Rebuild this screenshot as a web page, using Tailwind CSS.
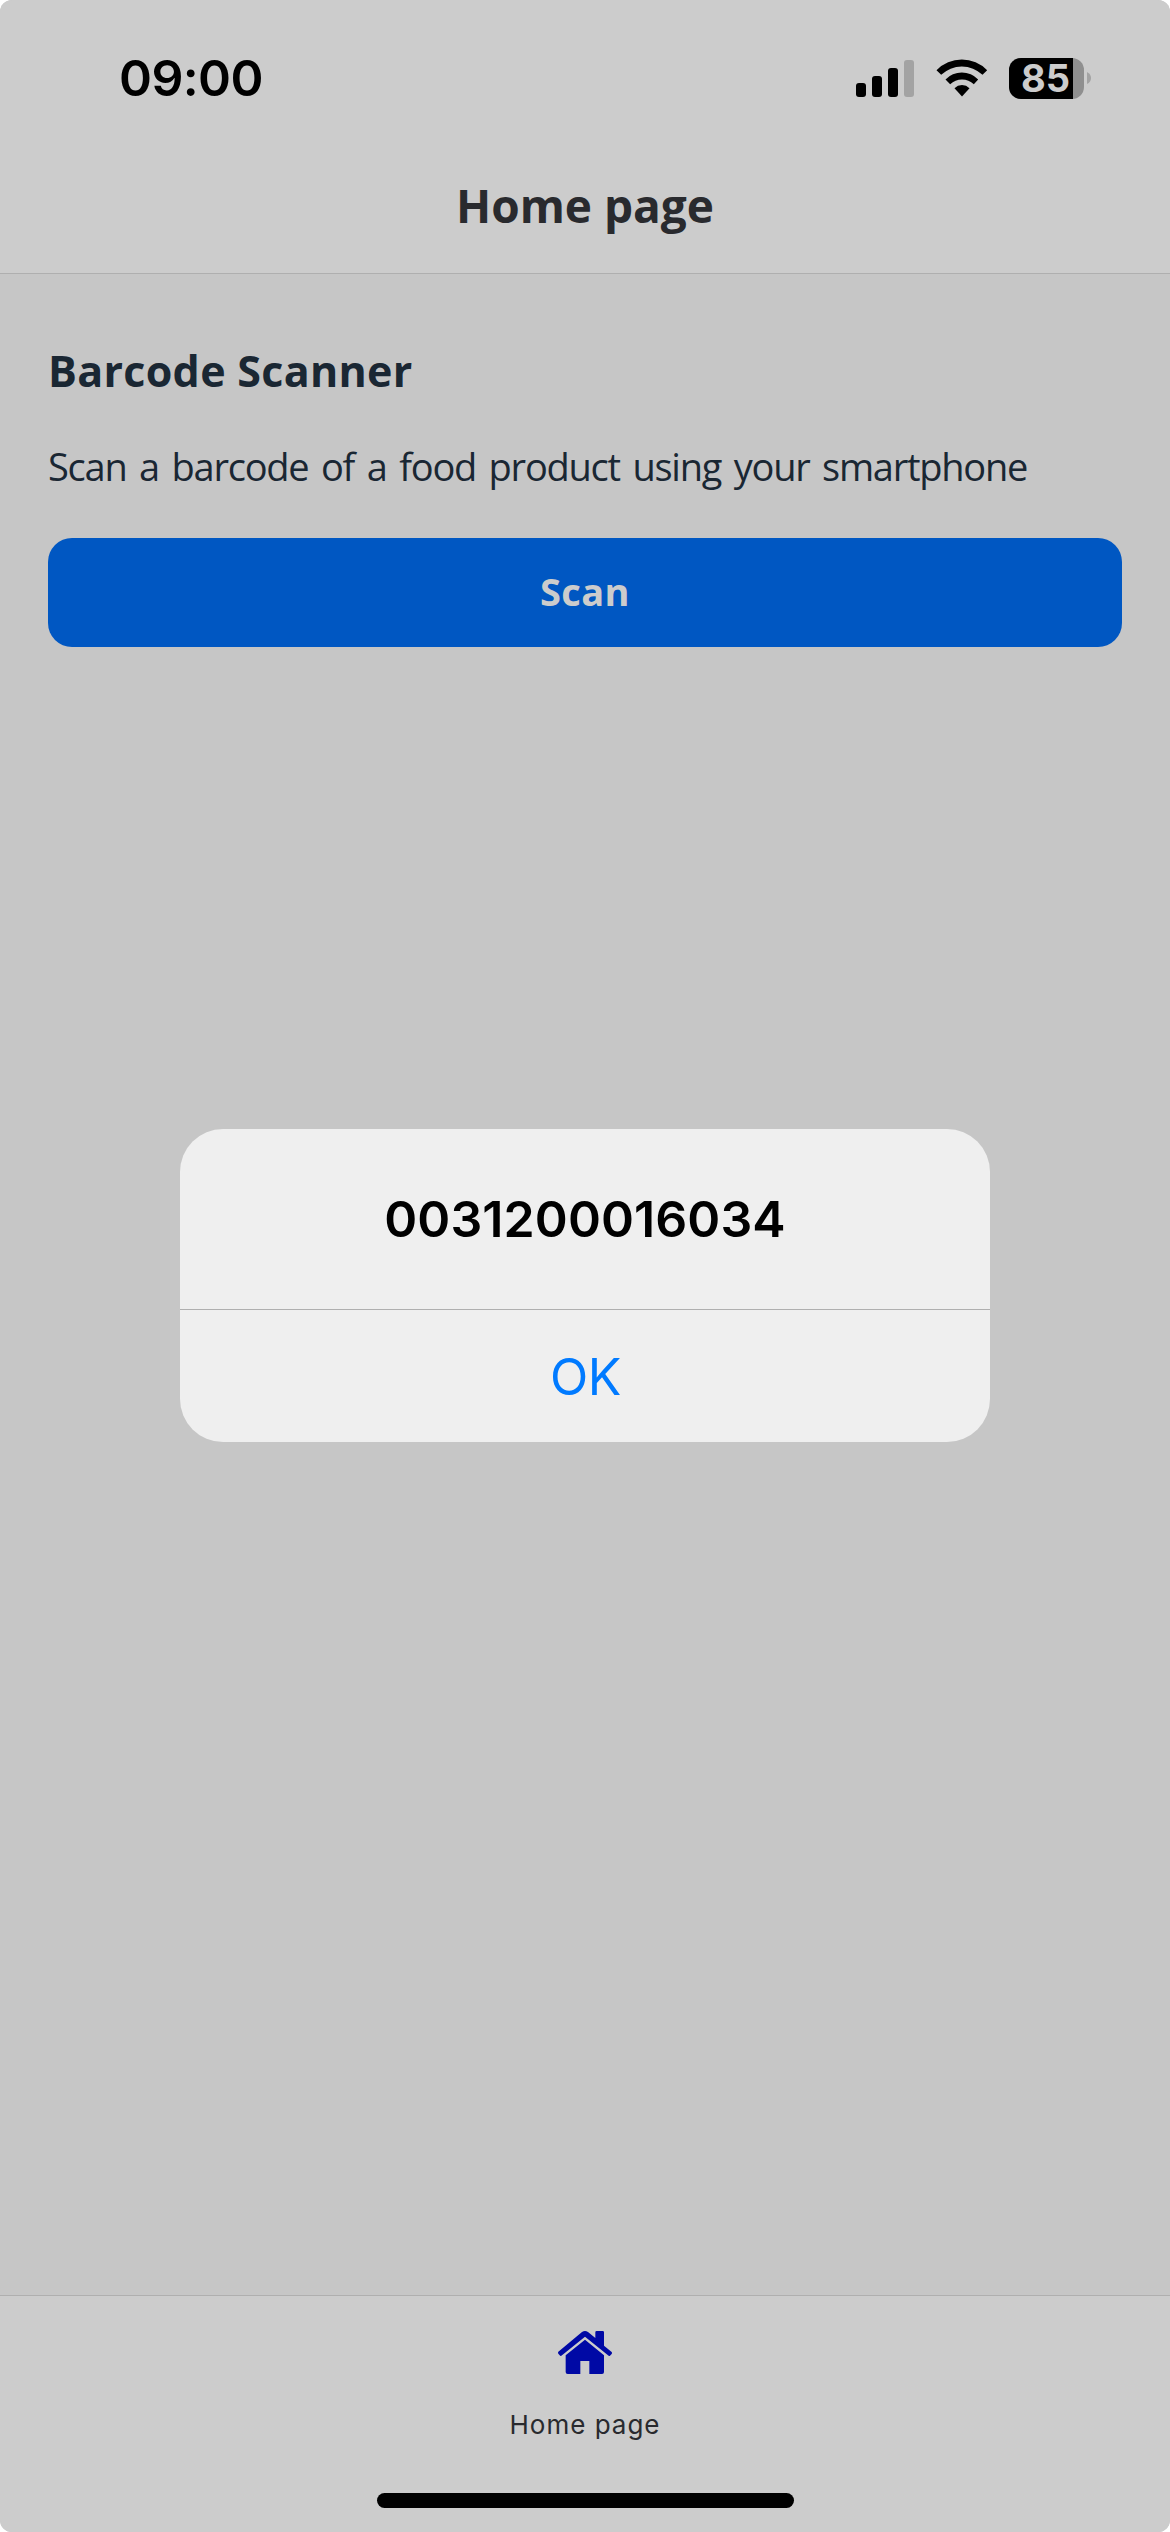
<!DOCTYPE html>
<html lang="en">
<head>
<meta charset="utf-8">
<title>Home page</title>
<script src="https://cdn.jsdelivr.net/npm/@tailwindcss/browser@4"></script>
</head>
<body class="bg-white">
<div class="relative flex h-[2532px] w-[1170px] flex-col overflow-hidden rounded-[12px] bg-[#c6c6c6] font-['Open_Sans',sans-serif]">
  <header class="flex h-[274px] flex-col border-b border-[#afafaf] bg-[#cccccc]">
    <div class="flex h-[156px] items-center justify-between pl-[119px] pr-[79px] font-['Inter',sans-serif]">
      <time class="text-[50px] font-semibold leading-none tracking-[-0.6px] text-black">09:00</time>
      <div class="flex items-center">
        <svg class="h-[38px] w-[58px]" viewBox="0 0 58 38">
          <rect x="0" y="24" width="10" height="14" rx="3"/>
          <rect x="16" y="17" width="10" height="21" rx="3"/>
          <rect x="32" y="9" width="10" height="29" rx="3"/>
          <rect x="48" y="1" width="10" height="37" rx="3" fill="#a3a3a3"/>
        </svg>
        <svg class="ml-[21px] h-[40px] w-[54px]" viewBox="313.5 82.5 162 120">
          <path d="M318 119A106 106 0 0 1 470 119L456 133A89 89 0 0 0 332 133Z"/>
          <path d="M345 147A68 68 0 0 1 443 147L430 161A52 52 0 0 0 359 161Z"/>
          <path d="M372 173A32 32 0 0 1 417 173L394.500 198Z"/>
        </svg>
        <div class="ml-[20px] flex items-center gap-[3px]">
          <div class="flex h-[41px] w-[75px] items-center rounded-[12px] bg-[#8f8f8f]">
            <div class="flex h-full w-[64px] items-center rounded-l-[12px] bg-black pl-[12px] text-[38px] font-bold leading-[41px] text-[#cccccc]">85</div>
          </div>
          <svg class="h-[14px] w-[4px]" viewBox="0 0 4 14"><path d="M0 1Q4 3 4 7T0 13Z" fill="#a3a3a3"/></svg>
        </div>
      </div>
    </div>
    <h1 class="flex h-[98px] items-center justify-center text-[46px] font-bold leading-none text-[#292a2e]">Home page</h1>
  </header>

  <main class="flex h-[2021px] flex-col px-[48px] pt-[67px] text-[#1a2733]">
    <h2 class="h-[60px] text-[43px] font-bold leading-[60px] tracking-[0.3px]">Barcode Scanner</h2>
    <p class="mt-[40px] h-[50px] whitespace-nowrap text-[38px] leading-[50px] tracking-[-1.25px] [word-spacing:4px]">Scan a barcode of a food product using your smartphone</p>
    <button class="mt-[47px] flex h-[109px] items-center justify-center rounded-[24px] bg-[#0057c2] pb-[3px] text-[38px] font-bold leading-none tracking-[0.4px] text-[#cccccc]">Scan</button>
  </main>

  <footer class="flex h-[237px] flex-col items-center border-t border-[#afafaf] bg-[#cccccc]">
    <svg class="mt-[35px] h-[43px] w-[54px] text-[#0009a5]" viewBox="234 153 162 129" fill="currentColor">
      <path d="M235 215L306 156Q315 150 324 156L346 174V157Q346 153 350 153H368Q372 153 372 157V197L395 216Q397 219 395 222L390 227Q387 229 384 226L315 170L246 226Q242 230 239 226L235 221Q233 218 235 215Z"/>
      <path d="M315 179L372 226V276Q372 282 366 282H328V243H301V282H263Q257 282 257 276V226Z"/>
    </svg>
    <span class="mt-[34px] font-['Inter',sans-serif] text-[26px] leading-[34px] tracking-[1px] text-[#292a2e]">Home page</span>
    <div class="mt-[51px] h-[15px] w-[417px] rounded-full bg-black"></div>
  </footer>

  <div role="alertdialog" class="absolute left-[180px] top-[1129px] flex h-[313px] w-[810px] flex-col overflow-hidden rounded-[43px] bg-[#efefef] text-center font-['Inter',sans-serif] text-[50px]">
    <div class="flex h-[181px] items-center justify-center border-b border-[#afafaf] font-semibold tracking-[0.1px] text-black">0031200016034</div>
    <button class="flex grow items-center justify-center pl-[1px] pt-[2px] tracking-[-0.5px] text-[#007aff]">OK</button>
  </div>
</div>
</body>
</html>
